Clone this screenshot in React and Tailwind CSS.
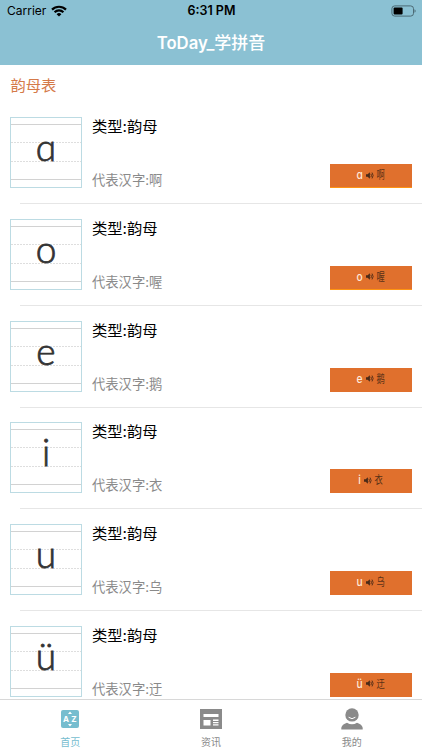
import React from 'react';

const finals = [
  { id: 1, letter: 'ɑ', hanzi: '啊', underline: true },
  { id: 2, letter: 'o', hanzi: '喔', underline: true },
  { id: 3, letter: 'e', hanzi: '鹅' },
  { id: 4, letter: 'i', hanzi: '衣' },
  { id: 5, letter: 'u', hanzi: '乌' },
  { id: 6, letter: 'ü', hanzi: '迂' },
];

const StatusBar = () => (
  <div className="grid h-[22px] grid-cols-3 items-center pl-[7px] pr-[6px] font-['Inter',sans-serif] text-black">
    <div className="flex items-center gap-[5px] text-[12px]">
      <span>Carrier</span>
      <svg width="16" height="12" viewBox="0 0 16 12" fill="none" stroke="#000" strokeWidth="2.2">
        <path d="M1 4.6a10 10 0 0 1 14 0" />
        <path d="M3.6 7.3a6.2 6.2 0 0 1 8.8 0" />
        <path d="M8 11.6 5.6 9.2a3.4 3.4 0 0 1 4.8 0Z" fill="#000" stroke="none" />
      </svg>
    </div>
    <div className="text-center text-[12.5px] font-semibold">6:31 PM</div>
    <svg className="justify-self-end" width="25" height="12" viewBox="0 0 25 12">
      <rect x="0.9" y="0.9" width="21.6" height="10.2" rx="2.8" fill="none" stroke="#4c6a75" />
      <rect x="2.6" y="2.5" width="9" height="7" rx="1" fill="#000" />
      <path d="M23.5 4.2a2 2 0 0 1 0 3.6Z" fill="#4c6a75" />
    </svg>
  </div>
);

const LetterCard = ({ letter }) => (
  <div className="relative h-[71px] w-[72px] shrink-0">
    <svg className="block" width="72" height="71" viewBox="0 0 72 71" fill="none">
      <rect x="0.5" y="0.5" width="71" height="70" stroke="#bcdbe3" />
      <path d="M1 7.5h70M1 62.5h70" stroke="#d2d2d2" />
      <path d="M1 25.5h70M1 44.5h70" stroke="#dedede" strokeDasharray="2 1" />
    </svg>
    <span className="absolute inset-x-0 top-[10px] text-center font-['Lato','DejaVu_Sans_Light',sans-serif] text-[37px] font-light leading-[40px] text-[#333] [-webkit-text-stroke:0.8px_#333]">
      {letter}
    </span>
  </div>
);

const Speaker = () => (
  <svg width="8" height="9" viewBox="0 0 9 9" fill="none" stroke="#4a2a18">
    <path d="M0 3h1.8L4.4.8v7.4L1.8 6H0Z" fill="#4a2a18" stroke="none" />
    <path d="M5.5 2.6q1.2 1.9 0 3.8M6.8 1.2q2.4 3.3 0 6.6" />
  </svg>
);

const FinalRow = ({ item }) => (
  <li className="h-[101.8px] shrink-0 px-[10px] pt-[14px]">
    <div className="flex h-[71px]">
      <LetterCard letter={item.letter} />
      <div className="ml-[10px] flex flex-1 flex-col justify-between">
        <h2 className="text-[15.3px] leading-[20px] text-black">类型:韵母</h2>
        <div className="flex items-end justify-between">
          <p className="text-[13.3px] leading-[16px] text-[#8a8a8a]">代表汉字:{item.hanzi}</p>
          <button
            className={`flex h-[24px] w-[82px] items-center justify-center gap-[2px] border-b bg-[#e0702d] pb-[1px] leading-none ${item.underline ? 'border-[#ff9412]' : 'border-[#e0702d]'}`}
          >
            <span className="inline-block scale-x-85 text-[12px] font-medium text-[#ffe9da]">{item.letter}</span>
            <Speaker />
            <span className="-ml-[1px] inline-block scale-x-75 pt-[1px] text-[11px] text-[#5a3016]">{item.hanzi}</span>
          </button>
        </div>
      </div>
    </div>
    <div className="ml-[10px] mr-[-10px] mt-[15px] h-px bg-[#e6e6e6]" />
  </li>
);

const HomeIcon = () => (
  <svg width="20" height="20" viewBox="0 0 20 20">
    <rect x="1" y="1" width="18" height="18" rx="2" fill="#76bdcf" />
    <path d="M10 2.5 12 5H8ZM10 17.5 8 15h4Z" fill="#fff" />
    <text x="6" y="12.9" textAnchor="middle" fontFamily="Inter, sans-serif" fontSize="8" fontWeight="700" fill="#fff">A</text>
    <text x="14" y="12.9" textAnchor="middle" fontFamily="Inter, sans-serif" fontSize="8" fontWeight="700" fill="#fff">Z</text>
  </svg>
);

const NewsIcon = () => (
  <svg width="22" height="22" viewBox="0 0 22 22">
    <path d="M0 1h22v20H0Z" fill="#8a8a8a" />
    <path d="M3.5 6h15v3h-15ZM3.5 12h7v5.5h-7ZM13 11.5h5.5V13H13ZM13 14h5.5v1.3H13ZM13 16.3h5.5v1.3H13Z" fill="#fff" />
  </svg>
);

const MineIcon = () => (
  <svg width="22" height="22" viewBox="0 0 22 22">
    <circle cx="11" cy="6.9" r="6.7" fill="#8a8a8a" />
    <path d="M0.3 21.5v-1.8q0.7-3.2 5.7-4.9 5 3 10 0 5 1.7 5.7 4.9v1.8Z" fill="#8a8a8a" />
    <path d="M7.9 9.5q3.1 2.6 6.2 0" fill="none" stroke="#fff" strokeLinecap="round" />
  </svg>
);

const tabs = [
  { name: '首页', icon: HomeIcon, color: 'text-[#76bdcf]' },
  { name: '资讯', icon: NewsIcon, color: 'text-[#8a8a8a]' },
  { name: '我的', icon: MineIcon, color: 'text-[#8a8a8a]' },
];

const App = () => {
  return (
    <div className="flex h-[750px] w-full flex-col overflow-hidden bg-white font-['Inter','Noto_Sans_CJK_SC',sans-serif]">
      <header className="h-[65px] shrink-0 bg-[#8bc1d3]">
        <StatusBar />
        <h1 className="text-center text-[17px] font-medium leading-[43px] text-white">
          <span className="text-[16.7px] font-semibold">ToDay_</span>学拼音
        </h1>
      </header>

      <main className="min-h-0 flex-1 overflow-hidden">
        <div className="h-[38px] pl-[10.5px] text-[15.3px] leading-[42px] text-[#d57a49]">韵母表</div>
        <ul>
          {finals.map((item) => (
            <FinalRow key={item.id} item={item} />
          ))}
        </ul>
      </main>

      <nav className="grid h-[51px] shrink-0 grid-cols-3 border-t border-[#d8d8d8] bg-white">
        {tabs.map((tab) => {
          const Icon = tab.icon;
          return (
            <div key={tab.name} className={`flex flex-col items-center pt-[8px] ${tab.color}`}>
              <div className="flex h-[22px] items-center">
                <Icon />
              </div>
              <span className="mt-[5px] text-[10px] leading-[14px]">{tab.name}</span>
            </div>
          );
        })}
      </nav>
    </div>
  );
};

export default App;
